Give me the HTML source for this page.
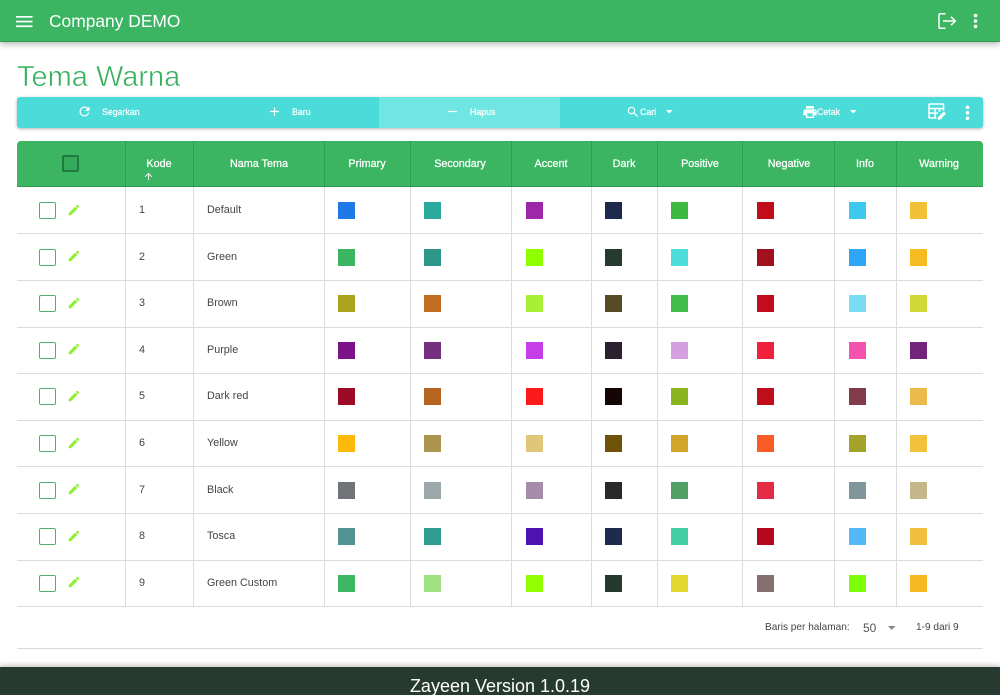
<!DOCTYPE html>
<html lang="id">
<head>
<meta charset="utf-8">
<title>Tema Warna</title>
<style>
html,body{margin:0;padding:0;width:1000px;height:695px;overflow:hidden;background:#fff}
body{position:relative;font-family:"Liberation Sans",sans-serif;color:#444;filter:blur(.3px)}
div,span,svg{position:absolute;display:block}
svg{overflow:visible}
.t{white-space:nowrap;line-height:14px}
.c{transform:translateX(-50%)}
#top{left:0;top:0;width:1000px;height:41.5px;background:#3cb563;border-bottom:1px solid #2f9f52;box-sizing:border-box;box-shadow:0 2px 6px rgba(0,0,0,.3)}
#bar{left:17px;top:97px;width:966px;height:30.5px;background:#4bdbd8;border-radius:3px;box-shadow:0 1px 3px rgba(0,0,0,.3)}
#hap{left:362px;top:0;width:181px;height:30.5px;background:#70e6e2}
#head{left:17px;top:141px;width:966px;height:46px;background:#3cb563;border-radius:4px 4px 0 0;border-bottom:1px solid #2a9a4e;box-sizing:border-box}
.hv{top:141px;width:1px;height:46px;background:#2f9f52}
.bv{top:187px;width:1px;height:419.5px;background:#dcdcdc}
.bh{left:17px;width:966px;height:1px;background:#dcdcdc}
.h{top:157px;color:#fff;font-size:10.8px;-webkit-text-stroke:.25px #fff}
.b{top:8px;color:#fff;font-size:8.8px;-webkit-text-stroke:.2px #fff}
.r{left:0;width:1000px;height:46.6px}
.ck{left:39px;top:15px;width:17px;height:17px;box-sizing:border-box;border:1.7px solid #4db06f;border-radius:2px}
.ed{left:67px;top:15.5px;width:14px;height:14px;fill:#8cf02e}
.n{left:139px;top:16px;font-size:10.8px}
.m{left:207px;top:16px;font-size:10.8px}
.s{top:15px;width:17px;height:17px}
.a{left:338px}.d{left:424px}.e{left:526px}.f{left:605px}.g{left:671px}.i{left:757px}.j{left:848.5px}.k{left:910px}
#ft{left:0;top:667px;width:1000px;height:28px;background:#263a2f;box-shadow:0 -2px 5px rgba(0,0,0,.22)}
</style>
</head>
<body>
<svg width="0" height="0" style="left:0;top:0"><defs>
<symbol id="pen" viewBox="0 0 24 24"><path d="M3 17.25V21h3.75L17.81 9.94l-3.75-3.75L3 17.25zM20.71 7.04c.39-.39.39-1.02 0-1.41l-2.34-2.34c-.39-.39-1.02-.39-1.41 0l-1.83 1.83 3.75 3.75 1.83-1.83z"/></symbol>
</defs></svg>

<div id="top"></div>
<svg style="left:16px;top:15px" width="17" height="13" fill="#fff"><rect y="1" width="16.5" height="1.7"/><rect y="5.7" width="16.5" height="1.7"/><rect y="10.4" width="16.5" height="1.7"/></svg>
<span class="t" style="left:49px;top:10.5px;font-size:17.4px;line-height:20px;color:#fff">Company DEMO</span>
<svg style="left:938px;top:12px" width="19" height="18" fill="none" stroke="#fff" stroke-width="1.5"><path d="M7.5 1.7H2a1 1 0 0 0-1 1v12.6a1 1 0 0 0 1 1h5.5"/><path d="M5 9h12M13 4.8 17.3 9 13 13.2"/></svg>
<svg style="left:973px;top:13px" width="5" height="16" fill="#fff"><circle cx="2.5" cy="2.6" r="1.8"/><circle cx="2.5" cy="8" r="1.8"/><circle cx="2.5" cy="13.4" r="1.8"/></svg>

<span class="t" style="left:17px;top:60px;font-size:29px;line-height:34px;color:#35b05c;-webkit-text-stroke:.55px #fff">Tema Warna</span>

<div id="bar">
<div id="hap"></div>
<svg style="left:60px;top:7px" width="15" height="15" viewBox="0 0 24 24" fill="#fff"><path d="M17.65 6.35C16.2 4.9 14.21 4 12 4c-4.42 0-7.99 3.58-7.99 8s3.57 8 7.99 8c3.73 0 6.84-2.55 7.73-6h-2.08c-.82 2.33-3.04 4-5.65 4-3.31 0-6-2.69-6-6s2.69-6 6-6c1.66 0 3.14.69 4.22 1.78L13 11h7V4l-2.35 2.35z"/></svg>
<span class="t b" style="left:85px">Segarkan</span>
<svg style="left:250px;top:7px" width="15" height="15" viewBox="0 0 24 24" fill="#fff"><path d="M19 13h-6v6h-2v-6H5v-2h6V5h2v6h6v2z"/></svg>
<span class="t b" style="left:275px">Baru</span>
<svg style="left:428px;top:7px" width="15" height="15" viewBox="0 0 24 24" fill="#fff"><path d="M19 13H5v-2h14v2z"/></svg>
<span class="t b" style="left:453px">Hapus</span>
<svg style="left:609px;top:7.5px" width="14" height="14" viewBox="0 0 24 24" fill="#fff"><path d="M15.5 14h-.79l-.28-.27C15.41 12.59 16 11.11 16 9.5 16 5.91 13.09 3 9.5 3S3 5.91 3 9.5 5.91 16 9.5 16c1.61 0 3.09-.59 4.23-1.57l.27.28v.79l5 4.99L20.49 19l-4.99-5zm-6 0C7.01 14 5 11.99 5 9.5S7.01 5 9.5 5 14 7.01 14 9.5 11.99 14 9.5 14z"/></svg>
<span class="t b" style="left:623px">Cari</span>
<svg style="left:649px;top:13px" width="7" height="4" fill="#fff"><path d="M0 0h6.5L3.25 3.5z"/></svg>
<svg style="left:785px;top:6.5px" width="16" height="16" viewBox="0 0 24 24" fill="#fff"><path d="M19 8H5c-1.66 0-3 1.34-3 3v6h4v4h12v-4h4v-6c0-1.66-1.34-3-3-3zm-3 11H8v-5h8v5zm3-7c-.55 0-1-.45-1-1s.45-1 1-1 1 .45 1 1-.45 1-1 1zm-1-9H6v4h12V3z"/></svg>
<span class="t b" style="left:800px">Cetak</span>
<svg style="left:833px;top:13px" width="7" height="4" fill="#fff"><path d="M0 0h6.5L3.25 3.5z"/></svg>
<svg style="left:911px;top:5.5px" width="19" height="19" fill="none" stroke="#fff" stroke-width="1.6"><path d="M15.5 7.5V2a1 1 0 0 0-1-1H2a1 1 0 0 0-1 1v12a1 1 0 0 0 1 1h6.5"/><path d="M1 5.6h14.5M1 10.2h9M7.2 5.6V15M11.5 5.6V9" /><path d="M9.8 16.7v-2.2l6-6 2.2 2.2-6 6z" fill="#fff" stroke="none"/></svg>
<svg style="left:948px;top:8px" width="5" height="16" fill="#fff"><circle cx="2.5" cy="2.4" r="1.8"/><circle cx="2.5" cy="7.8" r="1.8"/><circle cx="2.5" cy="13.2" r="1.8"/></svg>
</div>

<div id="head"></div>
<div class="hv" style="left:125px"></div><div class="hv" style="left:193px"></div><div class="hv" style="left:324px"></div><div class="hv" style="left:410px"></div><div class="hv" style="left:511px"></div><div class="hv" style="left:591px"></div><div class="hv" style="left:657px"></div><div class="hv" style="left:742px"></div><div class="hv" style="left:834px"></div><div class="hv" style="left:896px"></div>
<div style="left:62px;top:155px;width:17px;height:17px;box-sizing:border-box;border:2px solid #1f7a40;border-radius:2px;background:#37a95a"></div>
<span class="t h c" style="left:159px">Kode</span>
<svg style="left:143px;top:171px" width="11" height="11" viewBox="0 0 24 24" fill="#fff"><path d="M4 12l1.41 1.41L11 7.83V20h2V7.83l5.58 5.59L20 12l-8-8-8 8z"/></svg>
<span class="t h c" style="left:259px">Nama Tema</span>
<span class="t h c" style="left:367px">Primary</span>
<span class="t h c" style="left:460px">Secondary</span>
<span class="t h c" style="left:551px">Accent</span>
<span class="t h c" style="left:624px">Dark</span>
<span class="t h c" style="left:700px">Positive</span>
<span class="t h c" style="left:789px">Negative</span>
<span class="t h c" style="left:865px">Info</span>
<span class="t h c" style="left:939px">Warning</span>

<div class="bv" style="left:125px"></div><div class="bv" style="left:193px"></div><div class="bv" style="left:324px"></div><div class="bv" style="left:410px"></div><div class="bv" style="left:511px"></div><div class="bv" style="left:591px"></div><div class="bv" style="left:657px"></div><div class="bv" style="left:742px"></div><div class="bv" style="left:834px"></div><div class="bv" style="left:896px"></div>
<div class="bh" style="top:233.3px"></div><div class="bh" style="top:280px"></div><div class="bh" style="top:326.5px"></div><div class="bh" style="top:373.2px"></div><div class="bh" style="top:419.8px"></div><div class="bh" style="top:466.4px"></div><div class="bh" style="top:513px"></div><div class="bh" style="top:559.6px"></div><div class="bh" style="top:606.2px"></div>

<div class="r" style="top:187px"><div class="ck"></div><svg class="ed"><use href="#pen"/></svg><span class="t n">1</span><span class="t m">Default</span>
<div class="s a" style="background:#1e78e6"></div><div class="s d" style="background:#2ba89c"></div><div class="s e" style="background:#9c27a8"></div><div class="s f" style="background:#1d2a4d"></div><div class="s g" style="background:#3cb93f"></div><div class="s i" style="background:#c10c1c"></div><div class="s j" style="background:#3dc8ee"></div><div class="s k" style="background:#f2c037"></div></div>

<div class="r" style="top:233.6px"><div class="ck"></div><svg class="ed"><use href="#pen"/></svg><span class="t n">2</span><span class="t m">Green</span>
<div class="s a" style="background:#3cb563"></div><div class="s d" style="background:#2d9688"></div><div class="s e" style="background:#8fff00"></div><div class="s f" style="background:#263a2f"></div><div class="s g" style="background:#4cdcda"></div><div class="s i" style="background:#a0101f"></div><div class="s j" style="background:#2fa5f8"></div><div class="s k" style="background:#f5bb20"></div></div>

<div class="r" style="top:280.2px"><div class="ck"></div><svg class="ed"><use href="#pen"/></svg><span class="t n">3</span><span class="t m">Brown</span>
<div class="s a" style="background:#aca21e"></div><div class="s d" style="background:#c26e22"></div><div class="s e" style="background:#a8ef35"></div><div class="s f" style="background:#574b24"></div><div class="s g" style="background:#40bd4b"></div><div class="s i" style="background:#c20b1c"></div><div class="s j" style="background:#7adcf0"></div><div class="s k" style="background:#d2d738"></div></div>

<div class="r" style="top:326.8px"><div class="ck"></div><svg class="ed"><use href="#pen"/></svg><span class="t n">4</span><span class="t m">Purple</span>
<div class="s a" style="background:#7b1288"></div><div class="s d" style="background:#74307f"></div><div class="s e" style="background:#c63ee8"></div><div class="s f" style="background:#2b1f30"></div><div class="s g" style="background:#d4a0e0"></div><div class="s i" style="background:#f01f3c"></div><div class="s j" style="background:#f353ae"></div><div class="s k" style="background:#72237a"></div></div>

<div class="r" style="top:373.4px"><div class="ck"></div><svg class="ed"><use href="#pen"/></svg><span class="t n">5</span><span class="t m">Dark red</span>
<div class="s a" style="background:#9c0b25"></div><div class="s d" style="background:#b5651f"></div><div class="s e" style="background:#fa1a1a"></div><div class="s f" style="background:#150505"></div><div class="s g" style="background:#8bb51f"></div><div class="s i" style="background:#c00d1b"></div><div class="s j" style="background:#823b4b"></div><div class="s k" style="background:#ebba4d"></div></div>

<div class="r" style="top:420px"><div class="ck"></div><svg class="ed"><use href="#pen"/></svg><span class="t n">6</span><span class="t m">Yellow</span>
<div class="s a" style="background:#fdb90b"></div><div class="s d" style="background:#ab954f"></div><div class="s e" style="background:#e0c678"></div><div class="s f" style="background:#6e5208"></div><div class="s g" style="background:#d0a52a"></div><div class="s i" style="background:#fa5c25"></div><div class="s j" style="background:#a3a22a"></div><div class="s k" style="background:#f2c23c"></div></div>

<div class="r" style="top:466.6px"><div class="ck"></div><svg class="ed"><use href="#pen"/></svg><span class="t n">7</span><span class="t m">Black</span>
<div class="s a" style="background:#707478"></div><div class="s d" style="background:#9ba7a8"></div><div class="s e" style="background:#a78baa"></div><div class="s f" style="background:#2b2a2a"></div><div class="s g" style="background:#52a065"></div><div class="s i" style="background:#e42b45"></div><div class="s j" style="background:#80969c"></div><div class="s k" style="background:#c5b68b"></div></div>

<div class="r" style="top:513.2px"><div class="ck"></div><svg class="ed"><use href="#pen"/></svg><span class="t n">8</span><span class="t m">Tosca</span>
<div class="s a" style="background:#529491"></div><div class="s d" style="background:#2e9c8e"></div><div class="s e" style="background:#4d12af"></div><div class="s f" style="background:#1e2b4e"></div><div class="s g" style="background:#45cda2"></div><div class="s i" style="background:#b5081f"></div><div class="s j" style="background:#52b8fa"></div><div class="s k" style="background:#f2bf3c"></div></div>

<div class="r" style="top:559.8px"><div class="ck"></div><svg class="ed"><use href="#pen"/></svg><span class="t n">9</span><span class="t m">Green Custom</span>
<div class="s a" style="background:#3eb763"></div><div class="s d" style="background:#a0e283"></div><div class="s e" style="background:#94ff00"></div><div class="s f" style="background:#26392e"></div><div class="s g" style="background:#e2d72c"></div><div class="s i" style="background:#85706f"></div><div class="s j" style="background:#7bff0b"></div><div class="s k" style="background:#f6b922"></div></div>

<span class="t" style="left:765px;top:621px;font-size:10.1px">Baris per halaman:</span>
<span class="t" style="left:863px;top:621px;font-size:12px;color:#555">50</span>
<svg style="left:888px;top:626px" width="8" height="5" fill="#888"><path d="M0 0h7.5L3.75 4z"/></svg>
<span class="t" style="left:916px;top:621px;font-size:10.1px">1-9 dari 9</span>
<div style="left:17px;top:648px;width:966px;height:1px;background:#d8d8d8"></div>

<div id="ft"></div>
<span class="t c" style="left:500px;top:675.5px;font-size:18px;line-height:20px;color:#fff">Zayeen Version 1.0.19</span>
</body>
</html>
